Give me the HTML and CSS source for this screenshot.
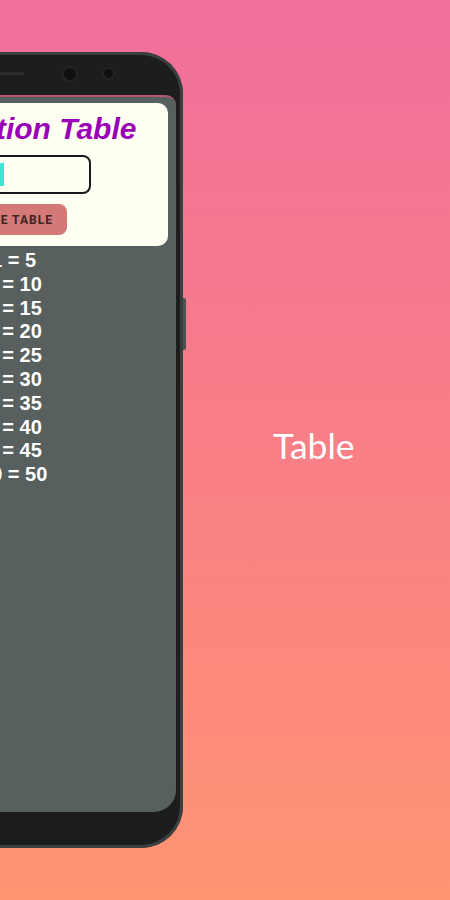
FILE: index.html
```html
<!DOCTYPE html>
<html lang="en">

<head>
    <meta charset="UTF-8">
    <meta name="viewport" content="width=device-width, initial-scale=1.0">
    <title>Multiplication Table</title>
    <link rel="stylesheet" href="styles.css">
</head>

<body>
    <div class="phone">
        <div class="bezel">
            <span class="speaker"></span>
            <span class="cam cam-big"></span>
            <span class="cam cam-small"></span>
        </div>
        <div class="screen">
            <div class="card">
                <h1 class="title">Multiplication Table</h1>
                <div class="input"><span class="caret"></span></div>
                <button class="gen-button">Generate Table</button>
            </div>
            <div class="rows">
                <div>5 x 1 = 5</div>
                <div>5 x 2 = 10</div>
                <div>5 x 3 = 15</div>
                <div>5 x 4 = 20</div>
                <div>5 x 5 = 25</div>
                <div>5 x 6 = 30</div>
                <div>5 x 7 = 35</div>
                <div>5 x 8 = 40</div>
                <div>5 x 9 = 45</div>
                <div>5 x 10 = 50</div>
            </div>
        </div>
        <span class="side-key"></span>
    </div>

    <p class="caption">Table</p>
</body>

</html>
```

FILE: styles.css
```css
html,
body {
    height: 100%;
}

body {
    margin: 0;
    display: flex;
    align-items: center;
    overflow: hidden;
    background: linear-gradient(to bottom, #f06f9c 0%, #f87f86 50%, #ff9472 100%);
    font-family: "Liberation Sans", Arial, sans-serif;
}

.phone {
    position: relative;
    flex: none;
    width: 372px;
    height: 796px;
    margin-left: -189px;
    box-sizing: border-box;
    padding: 0 7px 36px 7px;
    border-radius: 42px;
    background-color: #1c1d1d;
    box-shadow: inset 0 0 0 3px #3a4040;
    display: flex;
    flex-direction: column;
}

.bezel {
    height: 43px;
    display: flex;
    align-items: center;
    justify-content: flex-end;
    padding-right: 63px;
}

.speaker {
    width: 60px;
    height: 3px;
    border-radius: 2px;
    background-color: #2c2e2e;
    margin-right: 40px;
}

.cam {
    border-radius: 50%;
    background-color: #0e0f0f;
    box-shadow: 0 0 0 2px #232525;
}

.cam-big {
    width: 12px;
    height: 12px;
    margin-right: 28px;
}

.cam-small {
    width: 9px;
    height: 9px;
}

.screen {
    flex: 1;
    background-color: #57605e;
    border-top: 2px solid #b8566f;
    border-radius: 10px 10px 22px 22px;
    padding: 6px 8px 0 8px;
}

.card {
    background-color: #fffff2;
    border-radius: 10px;
    height: 143px;
    box-sizing: border-box;
    padding-top: 6px;
    display: flex;
    flex-direction: column;
    align-items: center;
}

.title {
    margin: 0;
    font-size: 30px;
    line-height: 40px;
    font-style: italic;
    font-weight: bold;
    color: #9a00b8;
}

.input {
    width: 188px;
    height: 39px;
    box-sizing: border-box;
    margin-top: 6px;
    border: 2px solid #1a1a1a;
    border-radius: 8px;
    display: flex;
    align-items: center;
    justify-content: center;
}

.caret {
    width: 4px;
    height: 23px;
    margin-left: 10px;
    background-color: #3ee6d6;
}

.gen-button {
    width: 140px;
    height: 31px;
    margin-top: 10px;
    border: none;
    border-radius: 8px;
    background-color: #d47878;
    color: #3b2424;
    font-family: Roboto, "Liberation Sans", sans-serif;
    font-size: 12px;
    font-weight: bold;
    letter-spacing: 1px;
    text-transform: uppercase;
}

.rows {
    padding-top: 3px;
    text-align: center;
    color: #ffffff;
    font-size: 20px;
    font-weight: bold;
    line-height: 23.8px;
}

.side-key {
    position: absolute;
    right: -3px;
    top: 246px;
    width: 3px;
    height: 52px;
    border-radius: 0 2px 2px 0;
    background-color: #4b5353;
}

.caption {
    margin: 0 0 10px 90px;
    color: #ffffff;
    font-family: Lato, "Noto Sans", sans-serif;
    font-size: 35.5px;
}
```
